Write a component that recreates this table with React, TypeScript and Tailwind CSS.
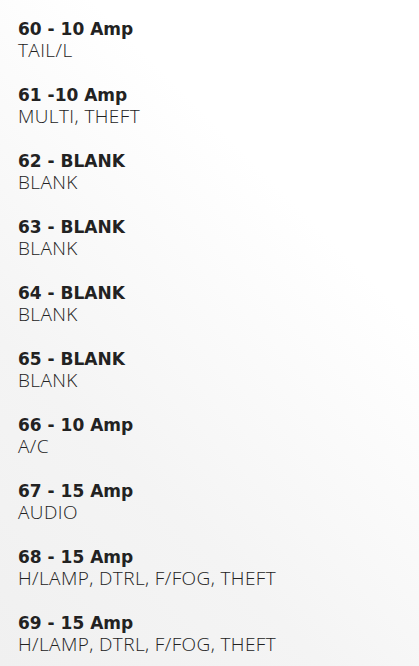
import React from 'react';

const fuses = [
  { title: '60 - 10 Amp', desc: 'TAIL/L' },
  { title: '61 -10 Amp', desc: 'MULTI, THEFT' },
  { title: '62 - BLANK', desc: 'BLANK' },
  { title: '63 - BLANK', desc: 'BLANK' },
  { title: '64 - BLANK', desc: 'BLANK' },
  { title: '65 - BLANK', desc: 'BLANK' },
  { title: '66 - 10 Amp', desc: 'A/C' },
  { title: '67 - 15 Amp', desc: 'AUDIO' },
  { title: '68 - 15 Amp', desc: 'H/LAMP, DTRL, F/FOG, THEFT' },
  { title: '69 - 15 Amp', desc: 'H/LAMP, DTRL, F/FOG, THEFT' },
];

export default function App() {
  return (
    <div className="min-h-[666px] w-full bg-[linear-gradient(225deg,#ffffff_0%,#ffffff_30%,#f4f4f4_70%,#f0f0f0_100%)]">
      <div className="flex flex-col gap-[24px] px-[18px] pt-[19px]">
        {fuses.map((f) => (
          <div key={f.title} className="flex flex-col">
            <div className="font-['DejaVu_Sans',sans-serif] text-[17px] font-bold leading-[21px] text-[#222]">
              {f.title}
            </div>
            <div className="font-['Open_Sans',sans-serif] text-[19px] font-[350] tracking-[0.4px] leading-[21px] text-[#222]">
              {f.desc}
            </div>
          </div>
        ))}
      </div>
    </div>
  );
}
